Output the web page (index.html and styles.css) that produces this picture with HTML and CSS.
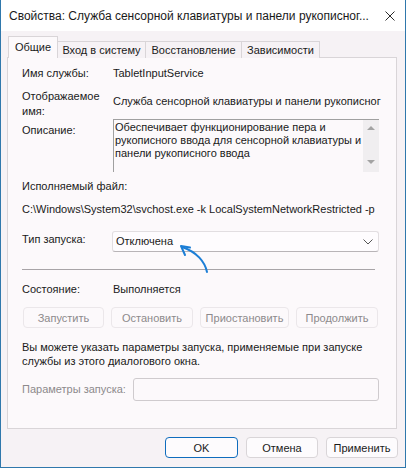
FILE: index.html
```html
<!DOCTYPE html>
<html lang="ru">
<head>
    <meta charset="UTF-8">
    <title>Свойства службы</title>
    <link rel="stylesheet" href="styles.css">
</head>
<body>

<div class="window">
    <div class="titlebar">
        <span class="title">Свойства: Служба сенсорной клавиатуры и панели рукописног...</span>
        <svg class="close" width="10" height="10" viewBox="0 0 10 10">
            <path d="M0.5 0.5 L9.5 9.5 M9.5 0.5 L0.5 9.5" stroke="#2b2b2b" stroke-width="1" fill="none"/>
        </svg>
    </div>

    <div class="tabs">
        <div class="tab active">Общие</div>
        <div class="tab tab-login">Вход в систему</div>
        <div class="tab tab-restore">Восстановление</div>
        <div class="tab tab-deps">Зависимости</div>
    </div>

    <div class="panel">
        <div class="row row-name">
            <div class="label">Имя службы:</div>
            <div class="value">TabletInputService</div>
        </div>
        <div class="row row-display">
            <div class="label">Отображаемое<br>имя:</div>
            <div class="value value-display">Служба сенсорной клавиатуры и панели рукописног</div>
        </div>
        <div class="row row-desc">
            <div class="label label-desc">Описание:</div>
            <div class="desc-box">
                <div class="desc-text">Обеспечивает функционирование пера и рукописного ввода для сенсорной клавиатуры и панели рукописного ввода</div>
                <div class="scroll">
                    <span class="arrow-up"></span>
                    <span class="arrow-down"></span>
                </div>
            </div>
        </div>
        <div class="line exe-label">Исполняемый файл:</div>
        <div class="line exe-path">C:\Windows\System32\svchost.exe -k LocalSystemNetworkRestricted -p</div>
        <div class="row row-startup">
            <div class="label label-startup">Тип запуска:</div>
            <div class="select">
                <span>Отключена</span>
                <svg width="10" height="6" viewBox="0 0 10 6">
                    <path d="M0.5 0.5 L5 5 L9.5 0.5" stroke="#555" stroke-width="1" fill="none"/>
                </svg>
            </div>
        </div>
        <div class="separator"></div>
        <div class="row row-state">
            <div class="label">Состояние:</div>
            <div class="value">Выполняется</div>
        </div>
        <div class="actions">
            <button class="btn-start" disabled>Запустить</button>
            <button class="btn-stop" disabled>Остановить</button>
            <button class="btn-pause" disabled>Приостановить</button>
            <button class="btn-resume" disabled>Продолжить</button>
        </div>
        <p class="hint">Вы можете указать параметры запуска, применяемые при запуске службы из этого диалогового окна.</p>
        <div class="params">
            <label class="params-label">Параметры запуска:</label>
            <div class="params-input"></div>
        </div>
    </div>

    <div class="footer">
        <button class="btn-ok">OK</button>
        <button>Отмена</button>
        <button>Применить</button>
    </div>

    <svg class="pointer" width="406" height="468" viewBox="0 0 406 468">
        <path d="M207 272 C205 262 197 252 182 247" stroke="#1c7ed6" stroke-width="2" fill="none" stroke-linecap="round"/>
        <path d="M190 247.5 L181 246 L185 255" stroke="#1c7ed6" stroke-width="2" fill="none" stroke-linecap="round" stroke-linejoin="round"/>
    </svg>
</div>

</body>
</html>
```

FILE: styles.css
```css
body {
    margin: 0;
    padding: 0;
    font-family: "Liberation Sans", Arial, sans-serif;
    font-size: 11px;
    color: #1a1a1a;
}
.window {
    position: relative;
    width: 406px;
    height: 468px;
    box-sizing: border-box;
    border: 1px solid #2f78ac;
    border-top: none;
    background-color: #f6f2f5;
}
.titlebar {
    height: 31px;
    background-color: #ffffff;
    display: flex;
    align-items: center;
    padding-left: 8px;
    font-size: 12px;
}
.title {
    flex: 1;
    padding-top: 1px;
}
.close {
    margin-right: 10px;
    margin-top: 1px;
}
.tabs {
    display: flex;
    align-items: flex-end;
    height: 21px;
    margin: 6px 0 -1px 7px;
    position: relative;
    z-index: 1;
}
.tab {
    box-sizing: border-box;
    height: 17px;
    border: 1px solid #d9d5d8;
    border-bottom: none;
    margin-left: -1px;
    padding-top: 1px;
    line-height: 15px;
    text-align: center;
    background-color: #f6f2f5;
}
.tab.active {
    height: 22px;
    width: 50px;
    margin-left: 0;
    padding-top: 3px;
    background-color: #fcf9fb;
}
.tab-login {
    width: 89px;
}
.tab-restore {
    width: 97px;
}
.tab-deps {
    width: 79px;
}
.panel {
    box-sizing: border-box;
    height: 372px;
    width: 390px;
    margin-left: 6px;
    border: 1px solid #d9d5d8;
    background-color: #fcf9fb;
    padding: 0 17px 0 14px;
    line-height: 15px;
}
.row {
    display: flex;
}
.label {
    width: 91px;
    flex-shrink: 0;
}
.row-name {
    margin-top: 8px;
}
.row-display {
    margin-top: 8px;
}
.value-display {
    margin-top: 5px;
    white-space: nowrap;
}
.label-desc {
    margin-top: 4px;
}
.desc-box {
    flex: 1;
    height: 53px;
    box-sizing: border-box;
    border-top: 1px solid #a0a0a0;
    border-left: 1px solid #a0a0a0;
    display: flex;
    background-color: #fcf9fb;
}
.desc-text {
    flex: 1;
    padding: 1px 0 0 1px;
    line-height: 13px;
}
.scroll {
    width: 16px;
    background-color: #f0eef0;
    position: relative;
}
.arrow-up, .arrow-down {
    position: absolute;
    left: 4px;
    width: 0;
    height: 0;
    border-left: 4px solid transparent;
    border-right: 4px solid transparent;
}
.arrow-up {
    top: 6px;
    border-bottom: 4px solid #a3a3a3;
}
.arrow-down {
    top: 40px;
    border-top: 4px solid #a3a3a3;
}
.exe-label {
    margin-top: 7px;
}
.exe-path {
    margin-top: 8px;
}
.row-startup {
    margin-top: 14px;
}
.label-startup {
    width: 90px;
    margin-top: 1px;
}
.select {
    flex: 1;
    box-sizing: border-box;
    height: 21px;
    border: 1px solid #e2dee1;
    border-bottom-color: #b8b4b7;
    border-radius: 3px;
    background-color: #fefcfe;
    display: flex;
    align-items: center;
    justify-content: space-between;
    padding: 0 5px 0 3px;
    line-height: 19px;
}
.separator {
    height: 1px;
    margin: 17px 4px 0 0;
    background-color: #a8a4a7;
}
.row-state {
    margin-top: 12px;
}
.actions {
    display: flex;
    gap: 7px;
    margin: 10px 0 0 1px;
}
button {
    box-sizing: border-box;
    height: 21px;
    padding: 0;
    border: 1px solid #d9d5d8;
    border-radius: 4px;
    background-color: #fdfbfd;
    color: #1a1a1a;
    font-family: "Liberation Sans", Arial, sans-serif;
    font-size: 11px;
}
.actions button {
    border-color: #ebe7ea;
    color: #8d8a8c;
    background-color: #fcf9fb;
}
.btn-start {
    width: 81px;
}
.btn-stop {
    width: 82px;
}
.btn-pause {
    width: 89px;
}
.btn-resume {
    width: 82px;
}
.hint {
    margin: 12px 0 0 0;
    line-height: 14px;
}
.params {
    display: flex;
    align-items: center;
    margin-top: 10px;
}
.params-label {
    width: 111px;
    color: #8d8a8c;
}
.params-input {
    flex: 1;
    height: 23px;
    box-sizing: border-box;
    border: 1px solid #cfcbce;
    border-radius: 3px;
}
.footer {
    display: flex;
    justify-content: flex-end;
    gap: 8px;
    margin: 8px 7px 0 0;
}
.footer button {
    width: 72px;
}
.footer .btn-ok {
    width: 73px;
    border-color: #0f6cbd;
}
.pointer {
    position: absolute;
    left: -1px;
    top: 0;
    pointer-events: none;
}
```
